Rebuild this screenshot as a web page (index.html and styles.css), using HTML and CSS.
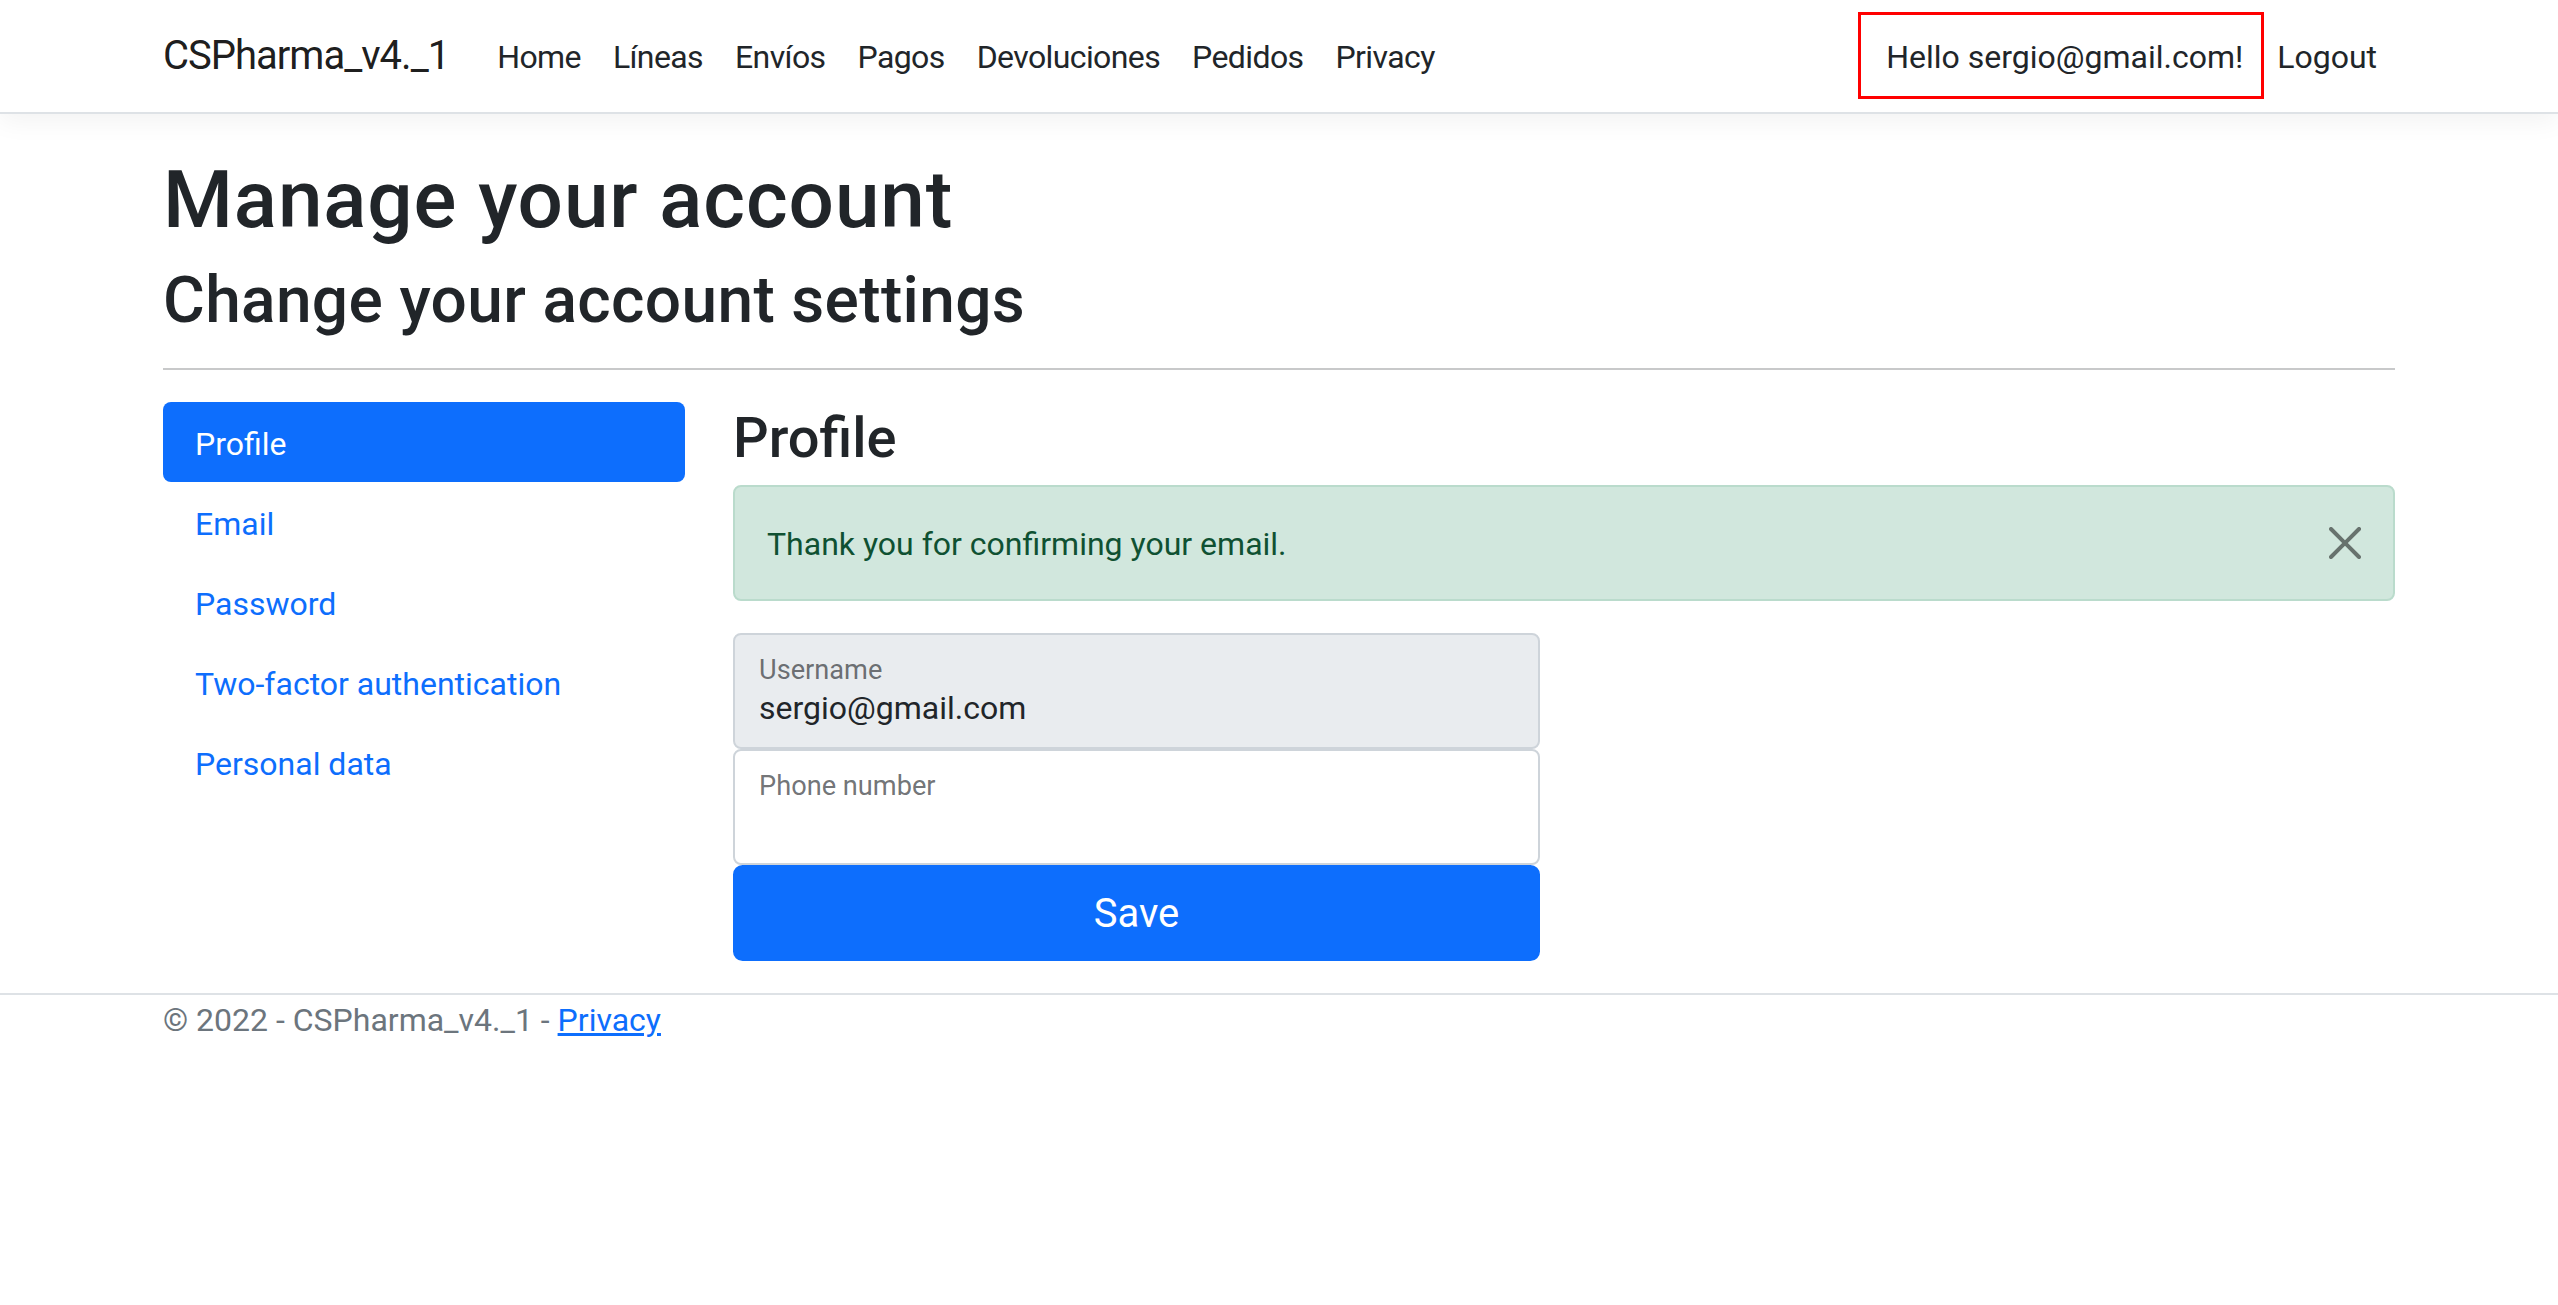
FILE: index.html
```
<!DOCTYPE html>
<html lang="en">
<head>
<meta charset="utf-8">
<title>Profile - CSPharma_v4._1</title>
<link rel="stylesheet" href="styles.css">
</head>
<body>
<header class="topbar">
  <nav class="navbar">
    <a class="brand" href="#">CSPharma_v4._1</a>
    <ul class="nav-main">
      <li><a class="nav-link" href="#">Home</a></li>
      <li><a class="nav-link" href="#">Líneas</a></li>
      <li><a class="nav-link" href="#">Envíos</a></li>
      <li><a class="nav-link" href="#">Pagos</a></li>
      <li><a class="nav-link" href="#">Devoluciones</a></li>
      <li><a class="nav-link" href="#">Pedidos</a></li>
      <li><a class="nav-link" href="#">Privacy</a></li>
    </ul>
    <ul class="nav-user">
      <li class="hello-item"><a class="nav-link" href="#">Hello sergio@gmail.com!</a><span class="highlight"></span></li>
      <li><button class="nav-link logout" type="button">Logout</button></li>
    </ul>
  </nav>
</header>

<main class="page">
  <h1 class="title">Manage your account</h1>
  <h2 class="subtitle">Change your account settings</h2>
  <hr class="rule">
  <div class="manage">
    <ul class="side-nav">
      <li><a class="side-link active" href="#">Profile</a></li>
      <li><a class="side-link" href="#">Email</a></li>
      <li><a class="side-link" href="#">Password</a></li>
      <li><a class="side-link" href="#">Two-factor authentication</a></li>
      <li><a class="side-link" href="#">Personal data</a></li>
    </ul>
    <section class="content">
      <h3 class="section-title">Profile</h3>
      <div class="alert">
        Thank you for confirming your email.
        <button class="btn-close" type="button" aria-label="Close">
          <svg viewBox="0 0 16 16" width="32" height="32"><path d="M.293.293a1 1 0 0 1 1.414 0L8 6.586 14.293.293a1 1 0 1 1 1.414 1.414L9.414 8l6.293 6.293a1 1 0 0 1-1.414 1.414L8 9.414l-6.293 6.293a1 1 0 0 1-1.414-1.414L6.586 8 .293 1.707a1 1 0 0 1 0-1.414z"/></svg>
        </button>
      </div>
      <form class="profile-form">
        <div class="floating">
          <input class="field field-disabled" id="username" value="sergio@gmail.com" disabled>
          <label class="float-label" for="username">Username</label>
        </div>
        <div class="floating">
          <input class="field" id="phone" value="">
          <label class="float-label" for="phone">Phone number</label>
        </div>
        <button class="btn-save" type="button">Save</button>
      </form>
    </section>
  </div>
</main>

<footer class="footer">
  <div class="footer-inner">© 2022 - CSPharma_v4._1 - <a href="#" class="footer-link">Privacy</a></div>
</footer>
</body>
</html>
```

FILE: styles.css
```
* { box-sizing: border-box; }

body {
  margin: 0;
  font-family: Roboto, "Liberation Sans", sans-serif;
  font-size: 32px;
  line-height: 1.5;
  color: #212529;
  background: #fff;
}

a { text-decoration: none; }

ul { list-style: none; margin: 0; padding: 0; }

/* ---------- top navbar ---------- */
.topbar {
  border-bottom: 2px solid #dee2e6;
  box-shadow: 0 8px 24px rgba(0, 0, 0, 0.05);
  margin-bottom: 32px;
}

.navbar {
  width: 2280px;
  margin: 0 auto;
  padding: 16px 24px;
  display: flex;
  align-items: center;
}

.brand {
  font-size: 40px;
  line-height: 60px;
  padding: 10px 0;
  margin-right: 32px;
  letter-spacing: -1px;
  color: rgba(0, 0, 0, 0.9);
}

.nav-main {
  display: flex;
  flex-grow: 1;
}

.nav-main .nav-link { letter-spacing: -0.6px; }

.nav-user {
  display: flex;
  align-items: center;
}

.nav-link {
  display: block;
  padding: 17px 16px 15px;
  color: #212529;
  font: inherit;
}

.hello-item { position: relative; }

.highlight {
  position: absolute;
  left: -12px;
  right: -5px;
  top: -4px;
  bottom: -3px;
  border: 3px solid #ff0000;
  pointer-events: none;
}

.logout {
  background: transparent;
  border: 2px solid transparent;
  padding: 13px 16px 11px;
  cursor: pointer;
}

/* ---------- page ---------- */
.page {
  width: 2280px;
  margin: 0 auto;
  padding: 0 24px 32px;
}

.title {
  font-size: 80px;
  line-height: 96px;
  font-weight: 500;
  letter-spacing: 0.9px;
  padding-top: 6px;
  margin: 0 0 10px;
}

.subtitle {
  font-size: 64px;
  line-height: 76.8px;
  font-weight: 500;
  letter-spacing: 0.35px;
  padding-top: 5px;
  margin: 0;
}

.rule {
  margin: 28px 0 32px;
  border: 0;
  border-top: 2px solid #c8c9ca;
  height: 0;
}

.manage {
  display: grid;
  grid-template-columns: 522px 1fr;
  column-gap: 48px;
}

.side-nav {
  display: flex;
  flex-direction: column;
}

.side-link {
  display: block;
  padding: 18px 32px 14px;
  color: #0d6efd;
  border-radius: 8px;
}

.side-link.active {
  background: #0d6efd;
  color: #fff;
}

.section-title {
  font-size: 56px;
  line-height: 67.2px;
  font-weight: 500;
  padding-top: 3px;
  margin: 0 0 13px;
}

.alert {
  position: relative;
  padding: 33px 96px 31px 32px;
  border: 2px solid #badbcc;
  border-radius: 8px;
  background: #d1e7dd;
  color: #0f5132;
  margin-bottom: 32px;
}

.btn-close {
  position: absolute;
  top: 0;
  right: 0;
  padding: 40px 32px;
  border: 0;
  background: transparent;
  opacity: 0.5;
  line-height: 0;
  cursor: pointer;
}

.btn-close svg { display: block; fill: #000; }

.profile-form {
  width: 807px;
  display: flex;
  flex-direction: column;
}

.floating { position: relative; }

.field {
  display: block;
  width: 100%;
  height: 116px;
  padding: 53px 24px 19px;
  font: inherit;
  font-size: 32px;
  line-height: 40px;
  color: #212529;
  background: #fff;
  border: 2px solid #ced4da;
  border-radius: 8px;
  margin: 0;
}

.field-disabled {
  background: #e9ecef;
  opacity: 1;
  -webkit-text-fill-color: #212529;
}

.float-label {
  position: absolute;
  top: 17px;
  left: 26px;
  font-size: 27.2px;
  line-height: 40.8px;
  color: rgba(33, 37, 41, 0.65);
  pointer-events: none;
}

.btn-save {
  display: block;
  width: 100%;
  height: 96px;
  padding: 17px 32px 15px;
  font: inherit;
  font-size: 40px;
  line-height: 60px;
  color: #fff;
  background: #0d6efd;
  border: 2px solid #0d6efd;
  border-radius: 9.6px;
  cursor: pointer;
}

/* ---------- footer ---------- */
.footer {
  border-top: 2px solid #dee2e6;
  color: #6c757d;
}

.footer-inner {
  width: 2280px;
  margin: 0 auto;
  padding: 2px 24px 0;
  line-height: 47px;
  white-space: nowrap;
}

.footer-link {
  color: #0d6efd;
  text-decoration: underline;
}
```
